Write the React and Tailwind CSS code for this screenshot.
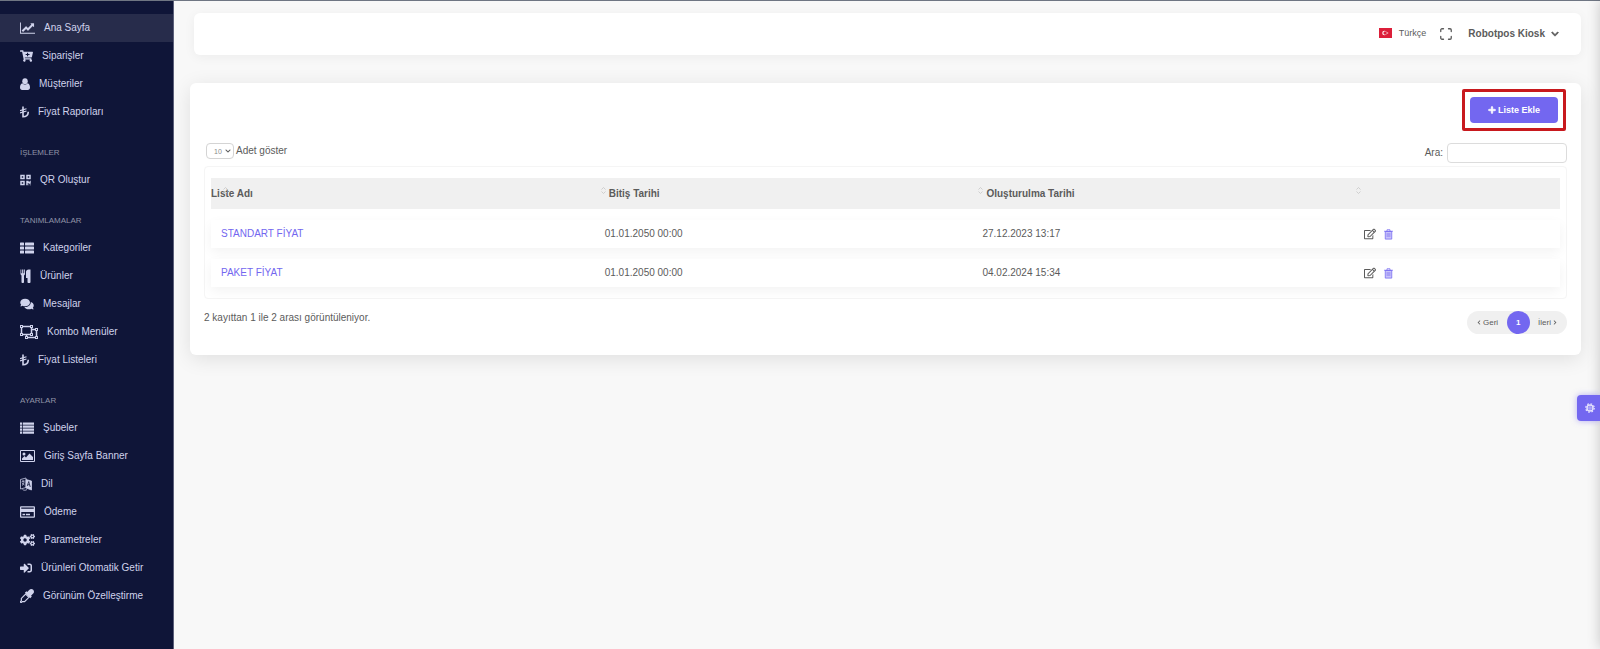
import {
    FaCartPlus,
    FaQrcode,
    FaComments,
    FaRegObjectUngroup,
    FaRegCreditCard,
    FaCogs,
    FaSignInAlt,
    FaPlus,
    FaRegEdit,
    FaChevronDown,
    FaChevronLeft,
    FaChevronRight,
} from 'react-icons/fa';

const LineChartIcon = ({ className }) => (
    <svg className={className} viewBox="0 0 2048 1792" fill="currentColor">
        <path d="M2048 1536v128H0V128h128v1408h1920zM1920 288v435q0 21-19.5 29.5T1865 745l-121-121-633 633q-10 10-23 10t-23-10l-233-233-416 416-192-192 585-585q10-10 23-10t23 10l233 233 464-464-121-121q-16-16-7.5-35.5T1581 256h307q14 0 23 9t9 23z" />
    </svg>
);

const UserIcon = ({ className }) => (
    <svg className={className} viewBox="0 0 20 24" fill="currentColor">
        <ellipse cx="10" cy="6.500" rx="5.500" ry="6" />
        <path d="M5 10.500c1.300 1.500 3 2.500 5 2.500s3.700-1 5-2.500c3.500.5 5 4 5 8.500 0 3-1.700 5-4.500 5h-11C1.700 24 0 22 0 19c0-4.500 1.500-8 5-8.500z" />
    </svg>
);

const LiraIcon = ({ className }) => (
    <svg className={className} viewBox="0 0 18 24" fill="none" stroke="currentColor">
        <path d="M6 1v20.500c6 0 10.500-3.500 10.500-10" strokeWidth="3.200" />
        <path d="M0 9.500l13-4M0 14l13-4" strokeWidth="2.400" />
    </svg>
);

const EyedropperIcon = ({ className }) => (
    <svg className={className} viewBox="0 0 26 26" fill="currentColor">
        <path d="M24.500 1.500c2 2 2 5 0 7l-4 4 1.500 1.500-3 3L9 7l3-3 1.500 1.500 4-4c2-2 5-2 7 0z" />
        <path d="M10.500 9.500l6 6-8 8H4.500L2 25.500.500 24l2-2.500v-4z" fill="none" stroke="currentColor" strokeWidth="2.200" />
    </svg>
);

const ThListIcon = ({ className }) => (
    <svg className={className} viewBox="0 0 28 24" fill="currentColor">
        <rect x="0" y="1" width="8" height="6" rx="1" />
        <rect x="10" y="1" width="18" height="6" rx="1" />
        <rect x="0" y="9" width="8" height="6" rx="1" />
        <rect x="10" y="9" width="18" height="6" rx="1" />
        <rect x="0" y="17" width="8" height="6" rx="1" />
        <rect x="10" y="17" width="18" height="6" rx="1" />
    </svg>
);

const ListIcon = ({ className }) => (
    <svg className={className} viewBox="0 0 28 24" fill="currentColor">
        <path d="M0 1h4v4.500H0zM5.500 1H28v4.500H5.500zM0 7h4v4.500H0zM5.500 7H28v4.500H5.500zM0 13h4v4.500H0zM5.500 13H28v4.500H5.500zM0 19h4v4.500H0zM5.500 19H28v4.500H5.500z" />
    </svg>
);

const CutleryIcon = ({ className }) => (
    <svg className={className} viewBox="0 0 22 28" fill="currentColor">
        <path d="M10 1v9c0 1.300-.8 2.400-2 2.800V26c0 1.100-.9 2-2 2H5c-1.100 0-2-.9-2-2V12.800C1.800 12.400 1 11.300 1 10V1h1.600v7.500h1.500V1h1.700v7.500h1.500V1h1.400v7.500H9V1zM21 1v25c0 1.100-.9 2-2 2h-2c-1.100 0-2-.9-2-2v-8h-3V6c0-2.800 2.200-5 5-5z" />
    </svg>
);

const PictureIcon = ({ className }) => (
    <svg className={className} viewBox="0 0 30 26" fill="currentColor">
        <path fillRule="evenodd" d="M2 1h26a2 2 0 0 1 2 2v20a2 2 0 0 1-2 2H2a2 2 0 0 1-2-2V3a2 2 0 0 1 2-2zm0 2v20h26V3z" />
        <circle cx="8" cy="9" r="3" />
        <path d="M4 21v-3l5-5 3 3 7-8 7 7v6z" />
    </svg>
);

const LanguageIcon = ({ className }) => (
    <svg className={className} viewBox="0 0 24 26" fill="none" stroke="currentColor" strokeWidth="1.500">
        <path d="M1 4l11-3v19L1 23zM3 9l6-2M6 5v3M4 16c3-2 4-5 4-8M4 11l5 4" />
        <path d="M12 4l11 3v18l-11-4z" fill="currentColor" />
        <path d="M14.500 17l3-9 3 11M15.500 14l4 1" stroke="#0f1538" />
        <path d="M5 24c3 2 6 2 9 0" />
    </svg>
);

const TrashIcon = ({ className }) => (
    <svg className={className} viewBox="0 0 18 22" fill="none" stroke="#7367f0" strokeWidth="1.500">
        <path d="M2.500 5h13v15.200h-13z" fill="#c9c3fa" />
        <path d="M0 4.500h18M6 4V1.500h6V4M5 10h8M5 14h8" />
    </svg>
);

const GearIcon = ({ className }) => (
    <svg className={className} viewBox="0 0 20 20" fill="none" stroke="#e3e0fd">
        <circle cx="10" cy="10" r="6" strokeWidth="3" />
        <circle cx="10" cy="10" r="8.500" strokeWidth="2.500" strokeDasharray="3.300 3.380" />
        <circle cx="10" cy="10" r="2.500" strokeWidth="1.500" />
    </svg>
);

const FlagIcon = ({ className }) => (
    <svg className={className} viewBox="0 0 26 20">
        <rect width="26" height="20" fill="#dc1f3a" />
        <circle cx="11" cy="10" r="4.500" fill="#fff" />
        <circle cx="12.300" cy="10" r="3.500" fill="#dc1f3a" />
        <path d="M14 10l5-2-2 2 2 2z" fill="#fff" />
    </svg>
);

const FullscreenIcon = ({ className }) => (
    <svg className={className} viewBox="0 0 24 24" fill="none" stroke="currentColor" strokeWidth="2.600" strokeLinecap="round" strokeLinejoin="round">
        <path d="M7 1.500H4A2.500 2.500 0 0 0 1.500 4v3M17 1.500h3A2.500 2.500 0 0 1 22.500 4v3M7 22.500H4A2.500 2.500 0 0 1 1.500 20v-3M17 22.500h3a2.500 2.500 0 0 0 2.500-2.500v-3" />
    </svg>
);

const menu = [
    {
        items: [
            { label: 'Ana Sayfa', icon: LineChartIcon, size: 'w-[15px] h-[14px]', active: true },
            { label: 'Siparişler', icon: FaCartPlus, size: 'w-[13px] h-3' },
            { label: 'Müşteriler', icon: UserIcon, size: 'w-[10px] h-3' },
            { label: 'Fiyat Raporları', icon: LiraIcon, size: 'w-[9px] h-3' },
        ],
    },
    {
        title: 'İŞLEMLER',
        items: [{ label: 'QR Oluştur', icon: FaQrcode, size: 'w-[11px] h-3' }],
    },
    {
        title: 'TANIMLAMALAR',
        items: [
            { label: 'Kategoriler', icon: ThListIcon, size: 'w-[14px] h-3' },
            { label: 'Ürünler', icon: CutleryIcon, size: 'w-[11px] h-[14px]' },
            { label: 'Mesajlar', icon: FaComments, size: 'w-[14px] h-3' },
            { label: 'Kombo Menüler', icon: FaRegObjectUngroup, size: 'w-[18px] h-4' },
            { label: 'Fiyat Listeleri', icon: LiraIcon, size: 'w-[9px] h-3' },
        ],
    },
    {
        title: 'AYARLAR',
        items: [
            { label: 'Şubeler', icon: ListIcon, size: 'w-[14px] h-3' },
            { label: 'Giriş Sayfa Banner', icon: PictureIcon, size: 'w-[15px] h-[14px]' },
            { label: 'Dil', icon: LanguageIcon, size: 'w-3 h-[14px]' },
            { label: 'Ödeme', icon: FaRegCreditCard, size: 'w-[15px] h-[14px]' },
            { label: 'Parametreler', icon: FaCogs, size: 'w-[15px] h-3' },
            { label: 'Ürünleri Otomatik Getir', icon: FaSignInAlt, size: 'w-3 h-3' },
            { label: 'Görünüm Özelleştirme', icon: EyedropperIcon, size: 'w-[14px] h-[14px]' },
        ],
    },
];

const lists = [
    { name: 'STANDART FİYAT', end: '01.01.2050 00:00', created: '27.12.2023 13:17' },
    { name: 'PAKET FİYAT', end: '01.01.2050 00:00', created: '04.02.2024 15:34' },
];

const SortMark = () => (
    <svg className="absolute left-3 top-[9px] w-[5px] h-[7px]" viewBox="0 0 10 14" fill="none" stroke="#c4c4c4" strokeWidth="1.500">
        <path d="M1 5l4-4 4 4M1 9l4 4 4-4" />
    </svg>
);

const Sidebar = () => (
    <aside className="w-[174px] shrink-0 bg-[#0f1538] border-r border-[#5c607a] pt-[13px]">
        <nav>
            {menu.map((group, i) => (
                <div key={i}>
                    {group.title && (
                        <h2 className="h-10 flex items-center pl-5 pt-[14px] text-[8px] text-[#8f93a6]">{group.title}</h2>
                    )}
                    <ul>
                        {group.items.map(({ label, icon: Icon, size, active }) => (
                            <li key={label}>
                                <a
                                    href="#"
                                    className={`h-7 flex items-center gap-[9px] pl-5 text-[10px] text-[#d0d3ec] ${active ? 'bg-[#272c4b]' : ''}`}
                                >
                                    <Icon className={`shrink-0 ${size}`} />
                                    <span>{label}</span>
                                </a>
                            </li>
                        ))}
                    </ul>
                </div>
            ))}
        </nav>
    </aside>
);

const Header = () => (
    <header className="ml-1 h-[42px] bg-white rounded-md shadow-[0_2px_12px_rgba(0,0,0,0.05)] flex items-center justify-end pr-[22px] text-[#5b5b5b]">
        <button type="button" className="flex items-center gap-[7px] pb-[2px] text-[9px]">
            <FlagIcon className="w-[13px] h-[10px]" />
            Türkçe
        </button>
        <button type="button" aria-label="Tam ekran" className="ml-[14px]">
            <FullscreenIcon className="w-3 h-3" />
        </button>
        <button type="button" className="ml-4 flex items-center gap-[6px] text-[10px] font-bold">
            Robotpos Kiosk
            <FaChevronDown className="w-2 h-2 stroke-current stroke-[40px]" />
        </button>
    </header>
);

const PriceTable = () => (
    <div className="mt-[3px] border border-[#f5f5f5] rounded px-[6px]">
        <table className="w-full table-fixed border-separate border-spacing-x-0 border-spacing-y-[11px] text-left text-[10px] text-[#5b5b5b]">
            <colgroup>
                <col className="w-[28%]" />
                <col className="w-[28%]" />
                <col className="w-[28%]" />
                <col className="w-[16%]" />
            </colgroup>
            <thead>
                <tr className="h-[31px] bg-[#f0f0f0]">
                    <th className="relative">
                        <SortMark />
                        Liste Adı
                    </th>
                    <th className="relative pl-5">
                        <SortMark />
                        Bitiş Tarihi
                    </th>
                    <th className="relative pl-5">
                        <SortMark />
                        Oluşturulma Tarihi
                    </th>
                    <th className="relative" aria-label="İşlemler">
                        <SortMark />
                    </th>
                </tr>
            </thead>
            <tbody>
                {lists.map((list) => (
                    <tr key={list.name} className="h-7 rounded bg-white shadow-[0_4px_12px_rgba(0,0,0,0.05)]">
                        <td className="pl-[10px]">
                            <a href="#" className="text-[#7367f0]">{list.name}</a>
                        </td>
                        <td className="pl-4">{list.end}</td>
                        <td className="pl-4">{list.created}</td>
                        <td className="pl-5">
                            <div className="flex items-center gap-2">
                                <button type="button" aria-label="Düzenle">
                                    <FaRegEdit className="w-3 h-3" />
                                </button>
                                <button type="button" aria-label="Sil">
                                    <TrashIcon className="w-[9px] h-[11px]" />
                                </button>
                            </div>
                        </td>
                    </tr>
                ))}
            </tbody>
        </table>
    </div>
);

const App = () => {
    return (
        <div className="min-h-screen flex border-t border-[#6f7683] bg-[#f8f8f8] font-['Liberation_Sans',Arial,sans-serif] leading-4">
            <Sidebar />

            <main className="flex-1 min-w-0 pt-3 pl-4 pr-[19px]">
                <Header />

                <section className="mt-7 bg-white rounded-md shadow-[0_4px_20px_rgba(0,0,0,0.1)] px-[14px] pt-[6px] pb-[21px] text-[10px] text-[#5b5b5b]">
                    <div className="flex justify-end pr-px">
                        <div className="rounded-xs border-[3px] border-[#c8191e] p-[5px]">
                            <button
                                type="button"
                                className="w-[88px] h-[26px] rounded bg-[#7367f0] text-white text-[9px] font-bold flex items-center justify-center gap-[2px]"
                            >
                                <FaPlus className="w-2 h-2 stroke-current stroke-[40px]" />
                                Liste Ekle
                            </button>
                        </div>
                    </div>

                    <div className="mt-3 flex items-start justify-between">
                        <label className="flex items-center gap-[2px] pl-[2px]">
                            <span className="relative flex items-center">
                                <select className="appearance-none w-7 h-4 pl-[7px] rounded border border-[#d4d4d4] text-[7px] text-[#8a8a8a]">
                                    <option>10</option>
                                </select>
                                <FaChevronDown className="absolute right-[3px] w-[6px] h-[6px] pointer-events-none" />
                            </span>
                            Adet göster
                        </label>
                        <label className="flex items-center gap-1">
                            Ara:
                            <input type="search" className="w-[120px] h-5 px-2 rounded border border-[#dcdcdc]" />
                        </label>
                    </div>

                    <PriceTable />

                    <div className="mt-[11px] flex items-start justify-between">
                        <p>2 kayıttan 1 ile 2 arası görüntüleniyor.</p>
                        <div className="mt-px w-[100px] h-[23px] rounded-full bg-[#f0f0f0] flex items-center justify-between px-[10px] text-[8px]">
                            <button type="button" className="flex items-center gap-[2px]">
                                <FaChevronLeft className="w-1 h-[5px]" />
                                Geri
                            </button>
                            <button type="button" className="size-[23px] rounded-full bg-[#7367f0] text-white font-bold">1</button>
                            <button type="button" className="flex items-center gap-[2px]">
                                İleri
                                <FaChevronRight className="w-1 h-[5px]" />
                            </button>
                        </div>
                    </div>
                </section>
            </main>

            {/* Customizer handle on the window edge */}
            <div className="fixed inset-y-0 left-full w-10 shadow-[0_0_14px_rgba(0,0,0,0.2)]" />
            <button
                type="button"
                aria-label="Ayarlar"
                className="fixed right-0 top-[395px] w-[23px] h-[26px] pl-[2px] rounded-l bg-[#7367f0] flex items-center justify-center shadow-[0_0_6px_rgba(115,103,240,0.5)]"
            >
                <GearIcon className="w-[10px] h-[10px]" />
            </button>
        </div>
    );
};

export default App;
